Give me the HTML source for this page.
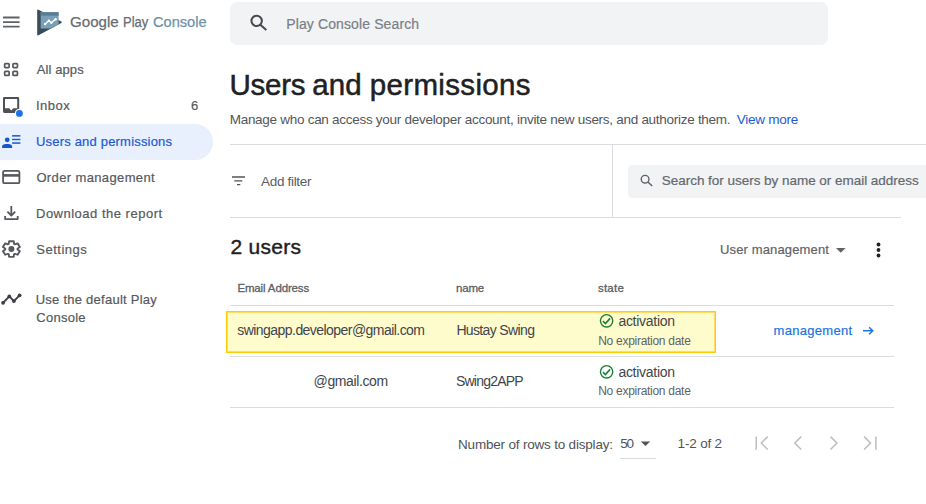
<!DOCTYPE html>
<html><head><meta charset="utf-8"><title>Users and permissions</title>
<style>
*{box-sizing:border-box;margin:0;padding:0}
html,body{width:926px;height:504px;overflow:hidden;background:#fff;font-family:"Liberation Sans",sans-serif;color:#202124}
.abs{position:absolute}
.t{position:absolute;white-space:pre}
.ln{position:absolute;height:1px;background:#dadce0}
</style></head><body>
<div class="abs" style="left:0;top:124px;width:213px;height:36px;background:#e8f0fe;border-radius:0 18px 18px 0"></div>
<div class="abs" style="left:230px;top:2px;width:598px;height:42.6px;background:#f1f3f4;border-radius:7px"></div>
<div class="ln" style="left:230px;top:144px;width:696px"></div>
<div class="ln" style="left:230px;top:217px;width:671px"></div>
<div class="abs" style="left:612px;top:144px;width:1px;height:73px;background:#dadce0"></div>
<div class="abs" style="left:628px;top:165px;width:298px;height:32.5px;background:#f1f3f4;border-radius:4px 0 0 4px"></div>
<div class="ln" style="left:230px;top:305px;width:664px"></div>
<div class="ln" style="left:230px;top:356px;width:664px"></div>
<div class="ln" style="left:230px;top:407px;width:664px"></div>
<div class="abs" style="left:226px;top:311px;width:490px;height:41.6px;background:#fefbcd;border:1px solid #ffcb05;box-shadow:inset 0 0 0 1px #ffdc62"></div>
<div class="ln" style="left:620px;top:458px;width:36px"></div>
<svg class="abs" style="left:0;top:0" width="926" height="504" viewBox="0 0 926 504" fill="none">
<!-- hamburger -->
<path d="M3 17.5h16.6M3 22.1h16.6M3 26.6h16.6" stroke="#5f6368" stroke-width="1.8"/>
<!-- logo -->
<path d="M38.5 9.7 L61.3 21.4 Q62.5 22.2 61.3 23 L38.5 35.3 Q37.2 35.9 37.2 34.6 L37.2 10.4 Q37.2 9.1 38.5 9.7Z" fill="#3a4c58"/>
<path d="M40.7 12.2 H58.6 V24.3 L50 28.6 H40.7Z" fill="#7aa0b7"/>
<path d="M40.7 12.2 H58.6 V15.65 H40.7Z" fill="#5a7d96"/>
<path d="M45.1 24.1 L48.9 20.7 L51.3 22.8 L55.6 19.3" stroke="#fff" stroke-width="1.3" stroke-linecap="round" stroke-linejoin="round"/>
<g fill="#fff"><circle cx="45.1" cy="24.1" r="1.2"/><circle cx="48.9" cy="20.7" r="1.2"/><circle cx="51.3" cy="22.8" r="1.2"/><circle cx="55.6" cy="19.3" r="1.2"/></g>
<!-- all apps -->
<g stroke="#55585d" stroke-width="1.7">
<rect x="4.65" y="63.55" width="4.5" height="4" rx="0.8"/><rect x="12.95" y="63.55" width="4.5" height="4" rx="0.8"/>
<rect x="4.65" y="71.35" width="4.5" height="4.1" rx="0.8"/><rect x="12.95" y="71.35" width="4.5" height="4.1" rx="0.8"/>
</g>
<!-- inbox -->
<rect x="4" y="98" width="14.2" height="14" rx="0.4" stroke="#4d5055" stroke-width="2"/>
<path d="M4 108.2 H9.2 L11.2 110.4 L13.3 108.2 H18.2 V112 H4Z" fill="#4d5055"/>
<circle cx="19.4" cy="113.4" r="4.6" fill="#fff"/><circle cx="19.4" cy="113.4" r="3.4" fill="#1a73e8"/>
<!-- users -->
<g fill="#1558d0"><circle cx="7.2" cy="139.8" r="2.4"/>
<path d="M2.1 148 V146.6 C2.1 144.5 4.8 144.1 7.1 144.1 C9.4 144.1 12.1 144.5 12.1 146.6 V148Z"/>
<rect x="12.1" y="135.1" width="8.3" height="1.5"/><rect x="12.1" y="138.8" width="8.3" height="1.4"/><rect x="12.1" y="142.3" width="8.3" height="1.5"/></g>
<!-- card -->
<rect x="3.1" y="170.9" width="16.3" height="12.3" rx="1.3" stroke="#55585d" stroke-width="1.8"/>
<rect x="3.1" y="174.1" width="16.3" height="2.6" fill="#55585d"/>
<!-- download -->
<g stroke="#55585d" stroke-width="1.8" stroke-linejoin="round"><path d="M11.3 206 V215.6"/><path d="M7.4 211.6 L11.3 215.5 L15.2 211.6"/><path d="M5.1 216.1 V219.1 H17.7 V216.1"/></g>
<!-- gear -->
<path d="M13.90 243.93 L13.50 241.23 L9.30 241.23 L8.90 243.93 L8.21 244.32 L5.67 243.32 L3.58 246.95 L5.71 248.65 L5.71 249.45 L3.58 251.15 L5.67 254.78 L8.21 253.78 L8.90 254.17 L9.30 256.87 L13.50 256.87 L13.90 254.17 L14.59 253.78 L17.13 254.78 L19.22 251.15 L17.09 249.45 L17.09 248.65 L19.22 246.95 L17.13 243.32 L14.59 244.32Z" stroke="#55585d" stroke-width="1.8" stroke-linejoin="round" transform="translate(11.4 0) scale(1.08 1) translate(-11.4 0)"/><circle cx="11.4" cy="249.05" r="3" fill="#55585d"/>
<!-- trend -->
<path d="M3.05 302.8 L9.3 296.4 L13.9 301.1 L19.6 295.3" stroke="#3c3f44" stroke-width="1.9" stroke-linejoin="round"/>
<g fill="#3c3f44"><circle cx="3.05" cy="302.8" r="1.9"/><circle cx="9.3" cy="296.4" r="1.9"/><circle cx="13.9" cy="301.1" r="1.9"/><circle cx="19.6" cy="295.3" r="1.9"/></g>
<!-- top search icon -->
<circle cx="256.65" cy="20.9" r="5.2" stroke="#46494e" stroke-width="2"/><path d="M260.4 24.8 L266.3 30" stroke="#46494e" stroke-width="2.1" stroke-linecap="butt"/>
<!-- filter icon -->
<path d="M232 177h13M234.3 180.9h8M237 184.6h3.3" stroke="#50545a" stroke-width="1.3"/>
<!-- small search -->
<circle cx="645.1" cy="179.2" r="3.85" stroke="#5f6368" stroke-width="1.4"/><path d="M647.9 182 L652.2 186" stroke="#5f6368" stroke-width="1.5"/>
<!-- dropdown arrow -->
<path d="M836 248 H845.6 L840.8 252.8Z" fill="#5f6368"/>
<!-- kebab -->
<g fill="#202124"><circle cx="878.5" cy="244.5" r="1.9"/><circle cx="878.5" cy="250" r="1.9"/><circle cx="878.5" cy="255.5" r="1.9"/></g>
<!-- checks -->
<g stroke="#188038" stroke-width="1.4"><circle cx="606.6" cy="320.8" r="6.15"/><circle cx="606.6" cy="371.8" r="6.15"/></g>
<g stroke="#188038" stroke-width="1.6"><path d="M603 321.2 L605.4 323.5 L610.1 318.4"/><path d="M603 372.2 L605.4 374.5 L610.1 369.4"/></g>
<!-- arrow -->
<g stroke="#1a73e8" stroke-width="1.5"><path d="M863 330.7 H872.6"/><path d="M869.2 327.2 L872.7 330.7 L869.2 334.2"/></g>
<!-- 50 arrow -->
<path d="M640.8 441.6 H650.2 L645.5 446Z" fill="#50545a"/>
<!-- pager -->
<g stroke="#bdbdbd" stroke-width="1.5"><path d="M756.2 436.4 V449.7"/><path d="M767.7 436.6 L761.3 443 L767.7 449.5"/>
<path d="M801.2 436.6 L794.8 443 L801.2 449.5"/>
<path d="M830.5 436.6 L836.9 443 L830.5 449.5"/>
<path d="M864.1 436.6 L870.5 443 L864.1 449.5"/><path d="M875.9 436.4 V449.7"/></g>
</svg>
<div class="t" style="left:70.2px;top:12px;font-size:15.5px;line-height:20px;letter-spacing:0.0px;color:#676b70;transform-origin:0 0;transform:scaleX(0.9735);-webkit-text-stroke:0.25px #676b70">Google</div>
<div class="t" style="left:123.3px;top:12px;font-size:15.5px;line-height:20px;letter-spacing:0.0px;color:#676b70;transform-origin:0 0;transform:scaleX(0.8355);-webkit-text-stroke:0.25px #676b70">Play</div>
<div class="t" style="left:152.6px;top:12px;font-size:15.5px;line-height:20px;letter-spacing:0.0px;color:#6c93a9;transform-origin:0 0;transform:scaleX(0.9415);-webkit-text-stroke:0.25px #6c93a9">Console</div>
<div class="t" style="left:36.7px;top:61px;font-size:13.0px;line-height:17px;letter-spacing:0.11px;color:#56595e;-webkit-text-stroke:0.2px #56595e">All apps</div>
<div class="t" style="left:36.0px;top:97px;font-size:13.0px;line-height:17px;letter-spacing:0.46px;color:#56595e;-webkit-text-stroke:0.2px #56595e">Inbox</div>
<div class="t" style="left:191.1px;top:97px;font-size:13.0px;line-height:17px;letter-spacing:0px;color:#56595e;-webkit-text-stroke:0.2px #56595e">6</div>
<div class="t" style="left:36.0px;top:133px;font-size:13.0px;line-height:17px;letter-spacing:0.19px;color:#1c5bd4;-webkit-text-stroke:0.2px #1c5bd4">Users and permissions</div>
<div class="t" style="left:36.4px;top:169px;font-size:13.0px;line-height:17px;letter-spacing:0.37px;color:#56595e;-webkit-text-stroke:0.2px #56595e">Order management</div>
<div class="t" style="left:36.0px;top:205px;font-size:13.0px;line-height:17px;letter-spacing:0.5px;color:#56595e;-webkit-text-stroke:0.2px #56595e">Download the report</div>
<div class="t" style="left:36.2px;top:241px;font-size:13.0px;line-height:17px;letter-spacing:0.52px;color:#56595e;-webkit-text-stroke:0.2px #56595e">Settings</div>
<div class="t" style="left:35.7px;top:291px;font-size:13.0px;line-height:17px;letter-spacing:0.25px;color:#56595e;-webkit-text-stroke:0.2px #56595e">Use the default Play</div>
<div class="t" style="left:36.3px;top:309px;font-size:13.0px;line-height:17px;letter-spacing:0.25px;color:#56595e;-webkit-text-stroke:0.2px #56595e">Console</div>
<div class="t" style="left:286.2px;top:15px;font-size:14.0px;line-height:18px;letter-spacing:0.12px;color:#7b7f85;-webkit-text-stroke:0.2px #7b7f85">Play Console Search</div>
<div class="t" style="left:229.5px;top:66px;font-size:29.5px;line-height:38px;letter-spacing:-0.24px;color:#202124;-webkit-text-stroke:0.5px #202124">Users</div>
<div class="t" style="left:312.2px;top:66px;font-size:29.5px;line-height:38px;letter-spacing:0.1px;color:#202124;-webkit-text-stroke:0.5px #202124">and</div>
<div class="t" style="left:369.8px;top:66px;font-size:29.5px;line-height:38px;letter-spacing:0.34px;color:#202124;-webkit-text-stroke:0.5px #202124">permissions</div>
<div class="t" style="left:229.7px;top:111px;font-size:13.5px;line-height:18px;letter-spacing:-0.28px;color:#53565b">Manage who can access your developer account, invite new users, and authorize them.</div>
<div class="t" style="left:736.7px;top:111px;font-size:13.5px;line-height:18px;letter-spacing:-0.25px;color:#1c5bd4">View more</div>
<div class="t" style="left:261.0px;top:173px;font-size:13.5px;line-height:18px;letter-spacing:-0.31px;color:#5a5d62">Add filter</div>
<div class="t" style="left:661.8px;top:172px;font-size:13.5px;line-height:18px;letter-spacing:-0.03px;color:#65696e;-webkit-text-stroke:0.2px #65696e">Search for users by name or email address</div>
<div class="t" style="left:230.5px;top:233px;font-size:21.0px;line-height:27px;letter-spacing:0.26px;color:#202124;-webkit-text-stroke:0.4px #202124">2 users</div>
<div class="t" style="left:720.1px;top:241px;font-size:13.0px;line-height:17px;letter-spacing:0.13px;color:#5f6368;-webkit-text-stroke:0.2px #5f6368">User management</div>
<div class="t" style="left:237.4px;top:281px;font-size:11.5px;line-height:15px;letter-spacing:-0.14px;color:#5c6065;-webkit-text-stroke:0.3px #5c6065">Email Address</div>
<div class="t" style="left:456.1px;top:281px;font-size:11.5px;line-height:15px;letter-spacing:-0.2px;color:#5c6065;-webkit-text-stroke:0.3px #5c6065">name</div>
<div class="t" style="left:597.9px;top:281px;font-size:11.5px;line-height:15px;letter-spacing:0.26px;color:#5c6065;-webkit-text-stroke:0.3px #5c6065">state</div>
<div class="t" style="left:237.3px;top:321px;font-size:14.0px;line-height:18px;letter-spacing:-0.55px;color:#42454a">swingapp.developer@gmail.com</div>
<div class="t" style="left:456.4px;top:321px;font-size:14.0px;line-height:18px;letter-spacing:-0.64px;color:#42454a">Hustay Swing</div>
<div class="t" style="left:618.4px;top:312px;font-size:14.0px;line-height:18px;letter-spacing:-0.28px;color:#42454a">activation</div>
<div class="t" style="left:598.2px;top:333px;font-size:12.0px;line-height:16px;letter-spacing:-0.28px;color:#5f6368">No expiration date</div>
<div class="t" style="left:773.5px;top:322px;font-size:13.0px;line-height:17px;letter-spacing:0.3px;color:#1a73e8;-webkit-text-stroke:0.2px #1a73e8">management</div>
<div class="t" style="left:313.6px;top:372px;font-size:14.0px;line-height:18px;letter-spacing:-0.39px;color:#42454a">@gmail.com</div>
<div class="t" style="left:455.9px;top:372px;font-size:14.0px;line-height:18px;letter-spacing:-0.77px;color:#42454a">Swing2APP</div>
<div class="t" style="left:618.4px;top:363px;font-size:14.0px;line-height:18px;letter-spacing:-0.28px;color:#42454a">activation</div>
<div class="t" style="left:598.2px;top:383px;font-size:12.0px;line-height:16px;letter-spacing:-0.28px;color:#5f6368">No expiration date</div>
<div class="t" style="left:458.0px;top:436px;font-size:13.5px;line-height:18px;letter-spacing:-0.19px;color:#50545a">Number of rows to display:</div>
<div class="t" style="left:620.3px;top:435px;font-size:13.5px;line-height:18px;letter-spacing:-1.21px;color:#50545a">50</div>
<div class="t" style="left:677.6px;top:435px;font-size:13.5px;line-height:18px;letter-spacing:-0.18px;color:#50545a">1-2 of 2</div>
</body></html>
